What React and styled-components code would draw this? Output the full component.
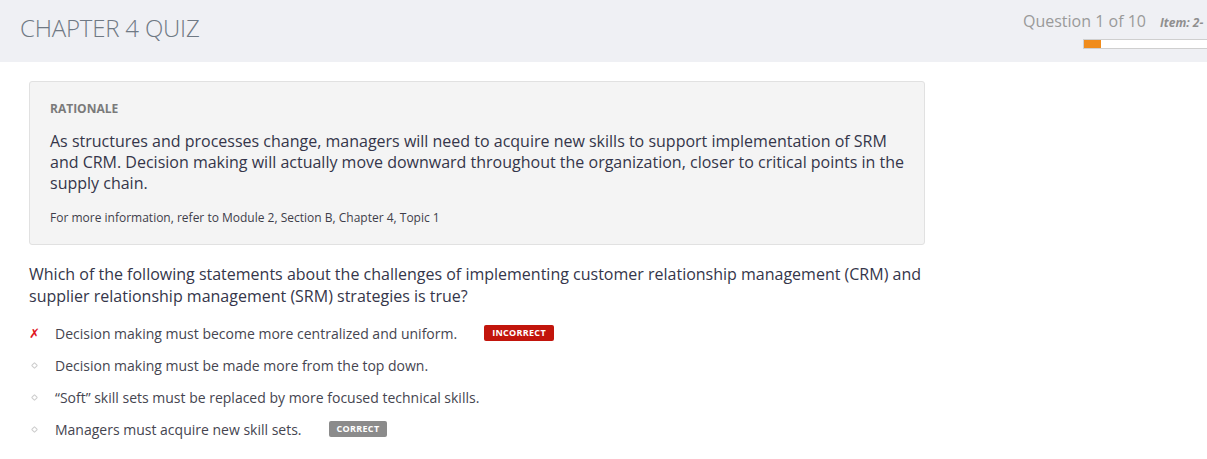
import React from "react";
import styled, { createGlobalStyle } from "styled-components";

const options = [
  { text: "Decision making must become more centralized and uniform.", status: "incorrect" },
  { text: "Decision making must be made more from the top down." },
  { text: "\u201cSoft\u201d skill sets must be replaced by more focused technical skills." },
  { text: "Managers must acquire new skill sets.", status: "correct" },
];

const App = () => {
  return (
    <>
      <GlobalStyle />
      <Header>
        <Title>CHAPTER 4 QUIZ</Title>
        <Progress>
          <ProgressTop>
            <Counter>Question 1 of 10</Counter>
            <Item>Item: 2-</Item>
          </ProgressTop>
          <Bar>
            <Fill style={{ width: "17px" }} />
          </Bar>
        </Progress>
      </Header>
      <Main>
        <Rationale>
          <Label>Rationale</Label>
          <Explanation>
            As structures and processes change, managers will need to acquire new skills to support
            implementation of SRM and CRM. Decision making will actually move downward throughout the
            organization, closer to critical points in the supply chain.
          </Explanation>
          <Reference>For more information, refer to Module 2, Section B, Chapter 4, Topic 1</Reference>
        </Rationale>
        <Question>
          Which of the following statements about the challenges of implementing customer relationship
          management (CRM) and supplier relationship management (SRM) strategies is true?
        </Question>
        <Options>
          {options.map((option, index) => (
            <Option key={index}>
              <Marker>
                {option.status === "incorrect" ? <Cross>✗</Cross> : <Dot />}
              </Marker>
              <OptionText>{option.text}</OptionText>
              {option.status && (
                <Badge $status={option.status}>
                  {option.status === "incorrect" ? "Incorrect" : "Correct"}
                </Badge>
              )}
            </Option>
          ))}
        </Options>
      </Main>
    </>
  );
};

export default App;

const GlobalStyle = createGlobalStyle`
  body {
    margin: 0;
    background: #ffffff;
    font-family: "Open Sans", "Noto Sans", sans-serif;
    overflow: hidden;
  }
`;

const Header = styled.div`
  display: flex;
  justify-content: space-between;
  height: 62px;
  padding-left: 20px;
  background: #eff0f4;
  overflow: hidden;
`;

const Title = styled.h1`
  margin: 0;
  padding-top: 11px;
  font-size: 24px;
  font-weight: 300;
  line-height: 34px;
  color: #6f7984;
  letter-spacing: -0.2px;
`;

const Progress = styled.div`
  width: 184px;
  flex-shrink: 0;
  padding-top: 9px;
  white-space: nowrap;
  overflow: hidden;
`;

const ProgressTop = styled.div`
  display: flex;
  align-items: baseline;
  gap: 14px;
`;

const Counter = styled.span`
  font-size: 16px;
  line-height: 24px;
  color: #9a9a9a;
`;

const Item = styled.span`
  font-size: 12px;
  font-weight: 700;
  font-style: italic;
  color: #8f8f8f;
`;

const Bar = styled.div`
  margin: 6px 0 0 60px;
  width: 160px;
  height: 8px;
  background: #ffffff;
  border: 1px solid #cfcfcf;
`;

const Fill = styled.div`
  height: 100%;
  background: #f08c1c;
`;

const Main = styled.div`
  padding: 19px 0 0 29px;
  width: 896px;
`;

const Rationale = styled.div`
  background: #f4f4f4;
  border: 1px solid #e1e1e1;
  border-radius: 3px;
  padding: 18px 16px 17px 20px;
`;

const Label = styled.div`
  font-size: 12px;
  font-weight: 700;
  line-height: 18px;
  text-transform: uppercase;
  color: #7a7a7a;
`;

const Explanation = styled.p`
  margin: 13px 0 0;
  font-size: 16px;
  line-height: 21px;
  color: #35364a;
`;

const Reference = styled.div`
  margin-top: 15px;
  font-size: 12px;
  line-height: 18px;
  color: #3e3e4a;
`;

const Question = styled.p`
  margin: 18px 0 0;
  font-size: 16px;
  line-height: 22px;
  color: #35364a;
`;

const Options = styled.div`
  margin-top: 10px;
  display: flex;
  flex-direction: column;
`;

const Option = styled.div`
  display: flex;
  align-items: center;
  height: 32px;
`;

const Marker = styled.div`
  width: 26px;
  display: flex;
  align-items: center;
`;

const Cross = styled.span`
  font-family: "DejaVu Sans", sans-serif;
  font-size: 13px;
  font-weight: 700;
  font-style: italic;
  color: #e0161e;
`;

const Dot = styled.span`
  display: block;
  width: 3px;
  height: 3px;
  margin-left: 3px;
  border: 1px solid #cdcdcd;
  border-radius: 1px;
  transform: rotate(45deg);
`;

const OptionText = styled.span`
  font-size: 14px;
  color: #454550;
`;

const Badge = styled.span`
  margin-left: 27px;
  padding: 0 8px;
  height: 16px;
  line-height: 16px;
  border-radius: 2px;
  font-size: 9px;
  font-weight: 700;
  letter-spacing: 0.3px;
  text-transform: uppercase;
  color: #ffffff;
  background: ${({ $status }) => ($status === "incorrect" ? "#c2150c" : "#8b8b8b")};
`;
